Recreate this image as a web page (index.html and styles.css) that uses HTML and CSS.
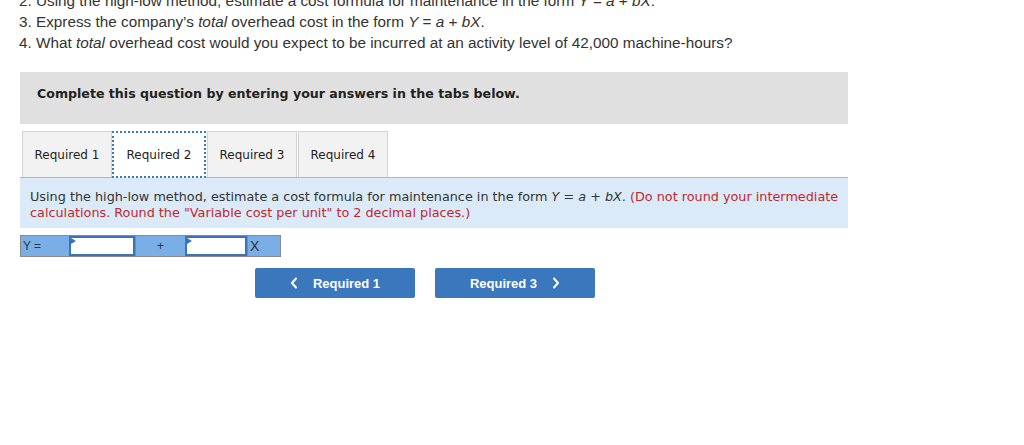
FILE: index.html
```html
<!DOCTYPE html>
<html>
<head>
<meta charset="utf-8">
<link rel="stylesheet" href="styles.css">
</head>
<body>
<div class="intro">
  <div class="line">2. Using the high-low method, estimate a cost formula for maintenance in the form <i>Y</i> = <i>a</i> + <i>bX</i>.</div>
  <div class="line">3. Express the company’s <i>total</i> overhead cost in the form <i>Y</i> = <i>a</i> + <i>bX</i>.</div>
  <div class="line">4. What <i>total</i> overhead cost would you expect to be incurred at an activity level of 42,000 machine-hours?</div>
</div>

<div class="panel">
  <div class="banner">Complete this question by entering your answers in the tabs below.</div>

  <div class="tabs">
    <div class="tab">Required 1</div>
    <div class="tab active">Required 2</div>
    <div class="tab">Required 3</div>
    <div class="tab">Required 4</div>
  </div>

  <div class="instructions">
    Using the high-low method, estimate a cost formula for maintenance in the form <i>Y</i> = <i>a</i> + <i>bX</i>. <span class="red">(Do not round your intermediate calculations. Round the "Variable cost per unit" to 2 decimal places.)</span>
  </div>

  <div class="formula">
    <div class="cell label">Y =</div>
    <div class="cell input in1"><span class="flag"></span></div>
    <div class="cell label plus">+</div>
    <div class="cell input in2"><span class="flag"></span></div>
    <div class="cell label x">X</div>
  </div>
</div>

<div class="nav">
  <div class="btn">
    <svg class="chev" width="8" height="12" viewBox="0 0 8 12"><path d="M6 1.5 L2 6 L6 10.5" fill="none" stroke="#fff" stroke-width="2" stroke-linecap="round" stroke-linejoin="round"/></svg>
    <span>Required 1</span>
  </div>
  <div class="btn">
    <span>Required 3</span>
    <svg class="chev" width="8" height="12" viewBox="0 0 8 12"><path d="M2 1.5 L6 6 L2 10.5" fill="none" stroke="#fff" stroke-width="2" stroke-linecap="round" stroke-linejoin="round"/></svg>
  </div>
</div>
</body>
</html>
```

FILE: styles.css
```css
html, body {
  margin: 0;
  padding: 0;
  background: #fff;
}

.intro {
  margin-top: -10px;
  padding-left: 19px;
  font-family: "Liberation Sans", Arial, sans-serif;
  font-size: 15.3px;
  line-height: 21px;
  color: #333;
}

.panel {
  margin: 19px 0 0 20px;
  width: 828px;
}

.banner {
  background: #e0e0e0;
  height: 52px;
  box-sizing: border-box;
  padding: 14px 0 0 17px;
  font-family: "DejaVu Sans", Verdana, sans-serif;
  font-weight: bold;
  font-size: 12.6px;
  line-height: 16px;
  color: #222;
}

.tabs {
  display: flex;
  gap: 1px;
  margin-top: 7px;
  padding-left: 2px;
  border-bottom: 1px solid #b5b5b5;
  height: 46px;
}

.tab {
  width: 90px;
  box-sizing: border-box;
  border: 1px solid #d4d4d4;
  border-bottom: none;
  background: #f2f2f2;
  display: flex;
  align-items: center;
  justify-content: center;
  font-family: "DejaVu Sans", Verdana, sans-serif;
  font-size: 12px;
  color: #222;
}

.tab.active {
  width: 94px;
  background: #fff;
  border: 2px dotted #3a78c0;
  margin-left: -1px;
  margin-bottom: -1px;
  height: 47px;
}

.instructions {
  background: #dbeaf8;
  height: 50px;
  box-sizing: border-box;
  padding: 11px 6px 0 10px;
  font-family: "DejaVu Sans", Verdana, sans-serif;
  font-size: 12.8px;
  line-height: 16px;
  color: #333;
}

.red {
  color: #c0282f;
}

.formula {
  margin-top: 7px;
  display: flex;
  width: 261px;
  height: 22px;
  border: 1px solid #8a8a8a;
  box-sizing: border-box;
  background: #7aaee6;
}

.cell {
  box-sizing: border-box;
  height: 100%;
  font-family: "Liberation Sans", Arial, sans-serif;
  color: #333;
}

.label {
  background: #7aaee6;
  font-size: 12px;
  line-height: 20px;
  padding-left: 2px;
}

.label:first-child {
  width: 48px;
}

.plus {
  width: 50px;
  text-align: center;
  padding-left: 0;
  border-left: 1px solid #6b8fb8;
}

.x {
  flex: 1;
  font-size: 14px;
  border-left: 1px solid #6b8fb8;
}

.input {
  position: relative;
  background: #fff;
  border: 2px solid #3b74b6;
}

.in1 {
  width: 66px;
}

.in2 {
  width: 62px;
}

.flag {
  position: absolute;
  left: 0;
  top: 0;
  width: 0;
  height: 0;
  border-top: 3px solid transparent;
  border-bottom: 3px solid transparent;
  border-left: 5px solid #3b74b6;
}

.nav {
  width: 850px;
  display: flex;
  justify-content: center;
  gap: 20px;
  margin-top: 11px;
}

.btn {
  width: 160px;
  height: 30px;
  background: #3a77bd;
  border-radius: 2px;
  display: flex;
  align-items: center;
  justify-content: center;
  gap: 15px;
  font-family: "Liberation Sans", Arial, sans-serif;
  font-weight: bold;
  font-size: 13px;
  color: #fff;
}

.chev {
  display: block;
}
```
